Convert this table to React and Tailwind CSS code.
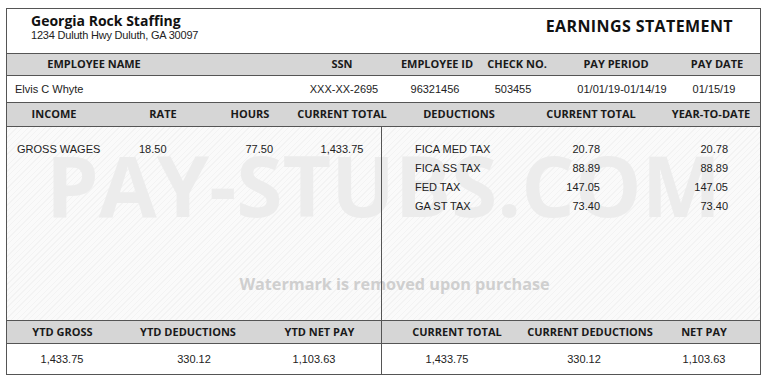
import React from "react";

const H = "font-['Open_Sans',sans-serif] font-bold text-[11px] text-[#1a1a1a] whitespace-nowrap";
const V = "font-['Liberation_Sans',Arial,sans-serif] text-[11px] text-[#222] whitespace-nowrap";

function Cell({ w, className = "", children }) {
  return (
    <div className={`flex justify-center shrink-0 ${w} ${className}`}>
      {children}
    </div>
  );
}

export default function App() {
  return (
    <div className="w-[768px] h-[384px] bg-white pt-[8px] pl-[6px]">
      <div className="w-[755px] border border-[#555] bg-white">
        {/* Company header */}
        <div className="h-[45px] border-b border-[#555] flex justify-between">
          <div className="pl-[24px] pt-[4px]">
            <div className="font-['Open_Sans',sans-serif] font-bold text-[14px] leading-[16px] text-[#111]">
              Georgia Rock Staffing
            </div>
            <div className={`${V} leading-[13px] tracking-[-0.2px]`}>
              1234 Duluth Hwy Duluth, GA 30097
            </div>
          </div>
          <div className="pr-[27px] pt-[7px] font-['Open_Sans',sans-serif] font-bold text-[16px] leading-[20px] tracking-[0.4px] text-[#111]">
            EARNINGS STATEMENT
          </div>
        </div>

        {/* Employee header row */}
        <div className="h-[22px] border-b border-[#555] bg-[#d6d6d6] flex items-center">
          <Cell w="w-[174px]"><span className={H}>EMPLOYEE NAME</span></Cell>
          <div className="w-[119px] shrink-0" />
          <Cell w="w-[84px]"><span className={H}>SSN</span></Cell>
          <Cell w="w-[106px]"><span className={H}>EMPLOYEE ID</span></Cell>
          <Cell w="w-[54px]"><span className={H}>CHECK NO.</span></Cell>
          <Cell w="w-[144px]"><span className={H}>PAY PERIOD</span></Cell>
          <Cell w="w-[58px]"><span className={H}>PAY DATE</span></Cell>
        </div>

        {/* Employee values row */}
        <div className="h-[27px] border-b border-[#555] flex items-center">
          <div className={`w-[293px] shrink-0 pl-[8px] ${V}`}>Elvis C Whyte</div>
          <Cell w="w-[88px]"><span className={V}>XXX-XX-2695</span></Cell>
          <Cell w="w-[94px]"><span className={V}>96321456</span></Cell>
          <Cell w="w-[62px]"><span className={V}>503455</span></Cell>
          <Cell w="w-[156px]"><span className={V}>01/01/19-01/14/19</span></Cell>
          <Cell w="w-[28px]"><span className={V}>01/15/19</span></Cell>
        </div>

        {/* Income / deductions header */}
        <div className="h-[24px] border-b border-[#555] bg-[#d6d6d6] flex items-center">
          <Cell w="w-[94px]"><span className={H}>INCOME</span></Cell>
          <Cell w="w-[124px]"><span className={H}>RATE</span></Cell>
          <Cell w="w-[50px]"><span className={H}>HOURS</span></Cell>
          <Cell w="w-[134px]"><span className={H}>CURRENT TOTAL</span></Cell>
          <Cell w="w-[100px]"><span className={H}>DEDUCTIONS</span></Cell>
          <Cell w="w-[164px]"><span className={H}>CURRENT TOTAL</span></Cell>
          <Cell w="w-[76px]"><span className={H}>YEAR-TO-DATE</span></Cell>
        </div>

        {/* Body */}
        <div className="relative h-[194px] border-b border-[#555] flex bg-[#f9f9f9] bg-[repeating-linear-gradient(135deg,#fafafa_0px,#fafafa_3px,#f3f3f3_3px,#f3f3f3_4px)]">
          <div className="pointer-events-none absolute left-0 right-0 top-[16px] text-center font-['Open_Sans',sans-serif] font-bold text-[84px] leading-[84px] text-[#ececec] whitespace-nowrap">
            PAY-STUBS.COM
          </div>
          <div className="pointer-events-none absolute left-0 right-0 top-[147px] pl-[22px] text-center font-['Open_Sans',sans-serif] font-bold text-[16.2px] leading-[20px] text-[#cfcfcf] whitespace-nowrap">
            Watermark is removed upon purchase
          </div>

          {/* Left half */}
          <div className="relative w-[375px] shrink-0 border-r border-[#555] pt-[13px]">
            <div className="flex items-center h-[19px]">
              <div className={`w-[132px] shrink-0 pl-[10px] ${V}`}>GROSS WAGES</div>
              <div className={`w-[61px] shrink-0 ${V}`}>18.50</div>
              <div className={`w-[73px] shrink-0 text-right ${V}`}>77.50</div>
              <div className={`ml-[30px] w-[78px] shrink-0 text-center ${V}`}>1,433.75</div>
            </div>
          </div>

          {/* Right half */}
          <div className="relative flex-1 pt-[13px] pl-[33px]">
            {[
              ["FICA MED TAX", "20.78", "20.78"],
              ["FICA SS TAX", "88.89", "88.89"],
              ["FED TAX", "147.05", "147.05"],
              ["GA ST TAX", "73.40", "73.40"],
            ].map(([label, cur, ytd]) => (
              <div key={label} className="flex items-center h-[19px]">
                <div className={`w-[125px] shrink-0 ${V}`}>{label}</div>
                <div className={`w-[60px] shrink-0 text-right ${V}`}>{cur}</div>
                <div className={`w-[128px] shrink-0 text-right ${V}`}>{ytd}</div>
              </div>
            ))}
          </div>
        </div>

        {/* Footer */}
        <div className="flex">
          <div className="w-[375px] shrink-0 border-r border-[#555]">
            <div className="h-[23px] border-b border-[#555] bg-[#d6d6d6] flex items-center">
              <Cell w="w-[111px]"><span className={H}>YTD GROSS</span></Cell>
              <Cell w="w-[140px]"><span className={H}>YTD DEDUCTIONS</span></Cell>
              <Cell w="w-[123px]"><span className={H}>YTD NET PAY</span></Cell>
            </div>
            <div className="h-[30px] flex items-center">
              <Cell w="w-[110px]"><span className={V}>1,433.75</span></Cell>
              <Cell w="w-[154px]"><span className={V}>330.12</span></Cell>
              <Cell w="w-[86px]"><span className={V}>1,103.63</span></Cell>
            </div>
          </div>
          <div className="flex-1">
            <div className="h-[23px] border-b border-[#555] bg-[#d6d6d6] flex items-center">
              <Cell w="w-[150px]"><span className={H}>CURRENT TOTAL</span></Cell>
              <Cell w="w-[116px]"><span className={H}>CURRENT DEDUCTIONS</span></Cell>
              <Cell w="w-[112px]"><span className={H}>NET PAY</span></Cell>
            </div>
            <div className="h-[30px] flex items-center">
              <Cell w="w-[130px]"><span className={V}>1,433.75</span></Cell>
              <Cell w="w-[144px]"><span className={V}>330.12</span></Cell>
              <Cell w="w-[96px]"><span className={V}>1,103.63</span></Cell>
            </div>
          </div>
        </div>
      </div>
    </div>
  );
}
